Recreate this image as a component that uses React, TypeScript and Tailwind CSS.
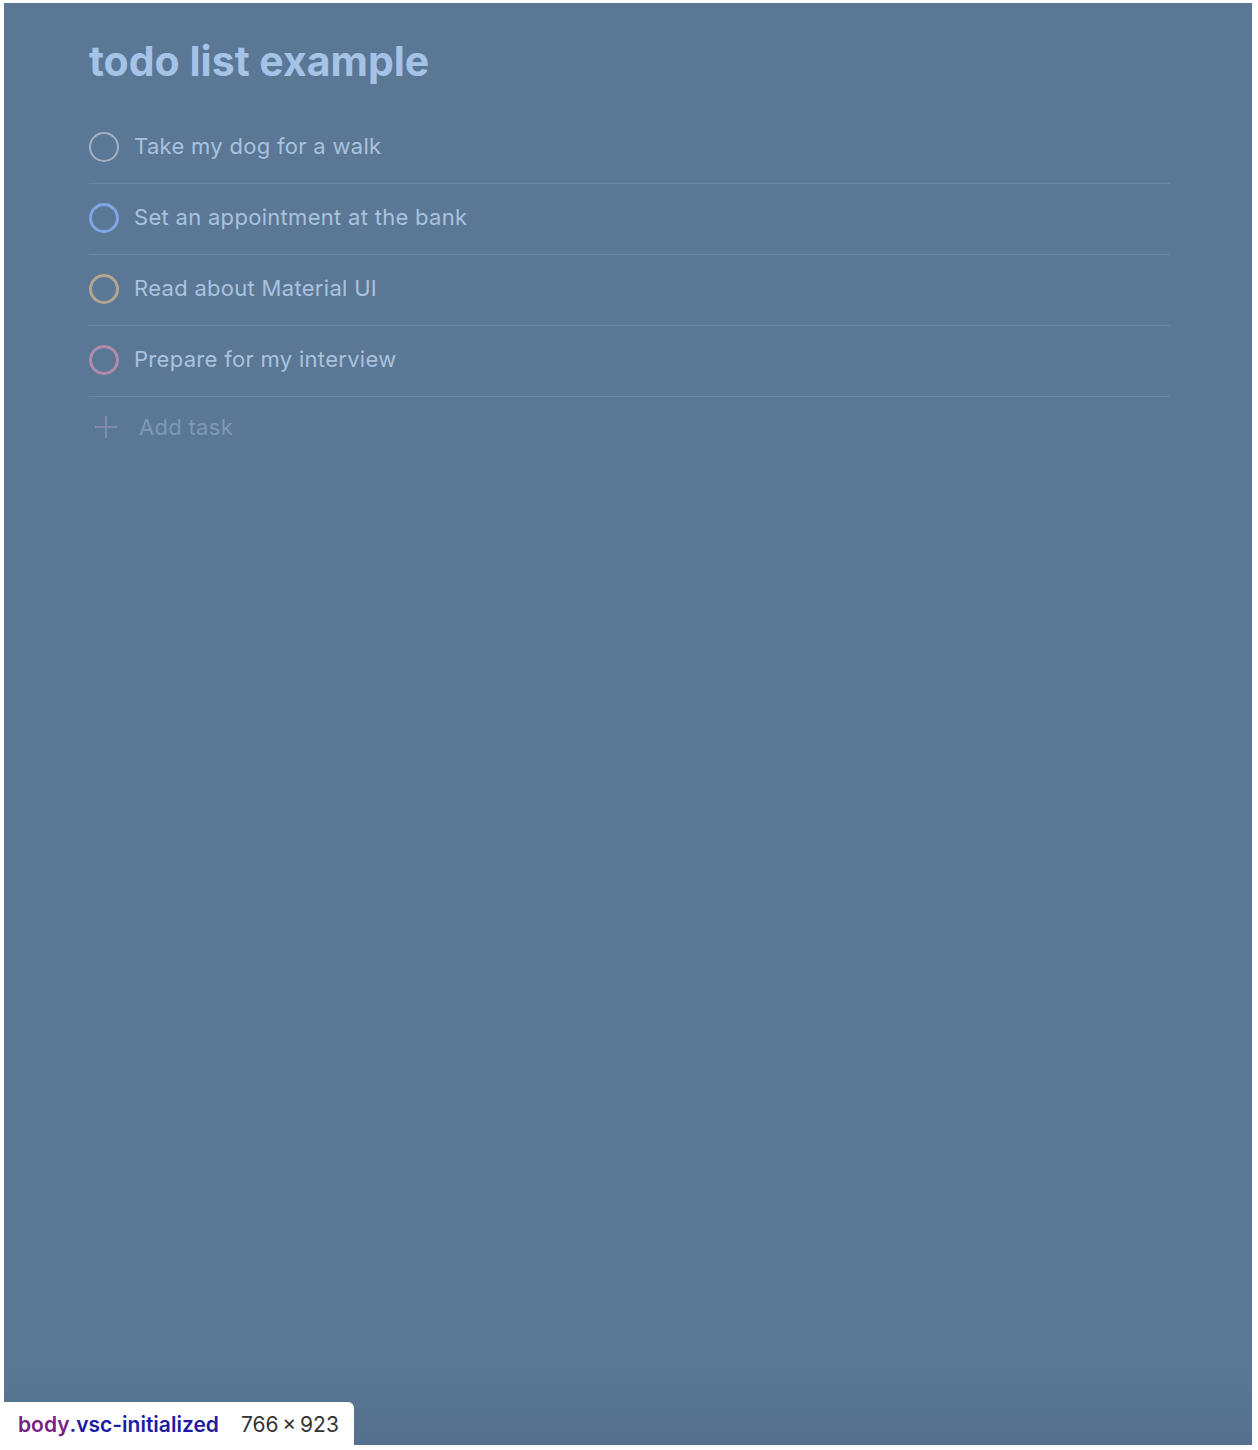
import { FC } from "react";

type Task = { label: string; ring: string };

const tasks: Task[] = [
  { label: "Take my dog for a walk", ring: "border-2 border-[#a3b1c3]" },
  { label: "Set an appointment at the bank", ring: "border-[3px] border-[#7ea6e2]" },
  { label: "Read about Material UI", ring: "border-[3px] border-[#b2a690]" },
  { label: "Prepare for my interview", ring: "border-[3px] border-[#b08ba9]" },
];

const App: FC = () => {
  return (
    <div className="w-[1258px] h-[1450px] bg-white pt-[3px] pl-[4px] pr-[6px] pb-[5px] font-['Inter',sans-serif]">
      <div className="relative h-full bg-[#5b7796] overflow-hidden">
        <div className="absolute inset-x-0 bottom-0 h-[80px] bg-gradient-to-b from-transparent to-[#4f6a88]/50" />
        <div className="relative pl-[85px] pr-[82px] pt-[35px]">
          <h1 className="text-[41px] leading-[46px] font-bold text-[#a5c3e6]">todo list example</h1>
          <ul className="mt-[29px]">
            {tasks.map((t) => (
              <li key={t.label} className="flex items-center h-[71px] pb-[3px] border-b border-[#6a86a4]">
                <span className={`w-[30px] h-[30px] rounded-full ${t.ring}`} />
                <span className="ml-[15px] text-[22px] tracking-[0.3px] text-[#a9c2de]">{t.label}</span>
              </li>
            ))}
          </ul>
          <div className="flex items-center h-[60px]">
            <svg width="24" height="24" viewBox="0 0 24 24" className="ml-[5px]">
              <path d="M12 1v22M1 12h22" stroke="#8f8fb2" strokeWidth="1.6" />
            </svg>
            <span className="ml-[21px] text-[22px] tracking-[0.3px] text-[#7d97b6]">Add task</span>
          </div>
        </div>
        <div className="absolute left-0 bottom-0 w-[350px] h-[43px] bg-white rounded-tr-[6px] flex items-center pl-[14px] pt-[3px] text-[21px]">
          <span className="font-semibold text-[#7a1f86]">body</span>
          <span className="font-semibold text-[#1c1ca3]">.vsc-initialized</span>
          <span className="ml-[22px] text-[#333333]">766{"\u2009×\u2009"}923</span>
        </div>
      </div>
    </div>
  );
};

export default App;
